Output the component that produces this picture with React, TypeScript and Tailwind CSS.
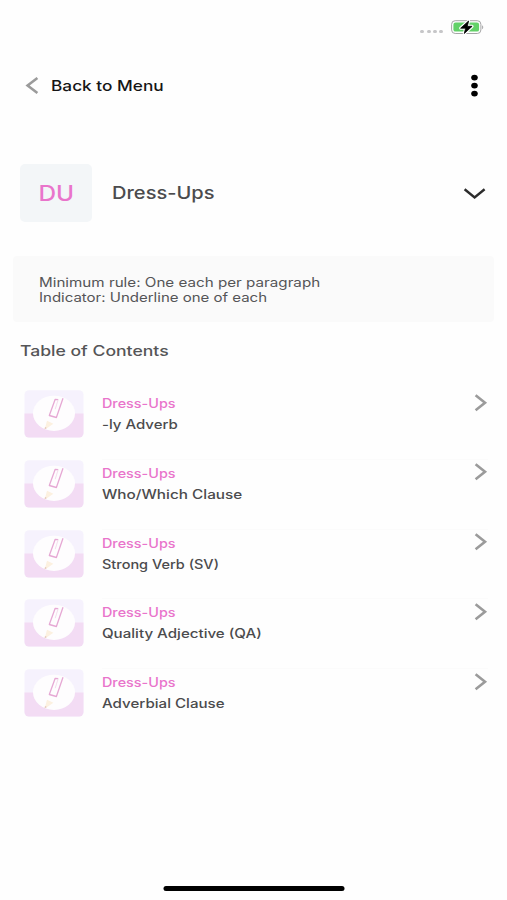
import React from 'react';

interface ContentItem {
    id: number;
    category: string;
    title: string;
    scale: string;
}

const items: ContentItem[] = [
    { id: 1, category: 'Dress-Ups', title: '-ly Adverb', scale: 'scale-x-[1.2]' },
    { id: 2, category: 'Dress-Ups', title: 'Who/Which Clause', scale: 'scale-x-[1.225]' },
    { id: 3, category: 'Dress-Ups', title: 'Strong Verb (SV)', scale: 'scale-x-[1.16]' },
    { id: 4, category: 'Dress-Ups', title: 'Quality Adjective (QA)', scale: 'scale-x-[1.21]' },
    { id: 5, category: 'Dress-Ups', title: 'Adverbial Clause', scale: 'scale-x-[1.21]' },
];

const StatusBar: React.FC = () => (
    <div className="flex h-[54px] items-start justify-end pt-[19px] pr-[23px]">
        <div className="mt-[11px] mr-[8px] flex gap-[2.2px]">
            {[0, 1, 2, 3].map(dot => (
                <span key={dot} className="h-[3.4px] w-[4px] rounded-full bg-[#c6c6c8]" />
            ))}
        </div>
        <svg className="h-[17px] w-[33px]" viewBox="0 0 33 17" fill="none">
            <rect x="0.6" y="1.7" width="29.3" height="12.8" rx="3.6" stroke="#a5a5a6" />
            <rect x="2.4" y="3.6" width="25.7" height="9" rx="2.2" fill="#62d168" />
            <path d="M31.3 6.3c1.2.6 1.2 3.4 0 4z" fill="#8d8d8f" />
            <path d="M17.6 2 9.6 9.2h5l-1.3 5.3 7.8-7.2h-4.8z" fill="#000" stroke="#fff" strokeWidth="3" strokeLinejoin="round" />
            <path d="M17.6 2 9.6 9.2h5l-1.3 5.3 7.8-7.2h-4.8z" fill="#000" stroke="#000" strokeWidth="0.8" strokeLinejoin="round" />
        </svg>
    </div>
);

const Thumbnail: React.FC = () => (
    <svg className="h-[48px] w-[60px] shrink-0" viewBox="0 0 60 48" fill="none">
        <rect x="0.5" y="0.3" width="59" height="47.2" rx="4.5" fill="#f6f2fd" />
        <path d="M.5 23.5h59V43a4.5 4.5 0 0 1-4.5 4.5H5A4.5 4.5 0 0 1 .5 43z" fill="#f3dcf4" />
        <ellipse cx="30" cy="23.3" rx="21" ry="17.6" fill="#fefdfe" />
        <path d="m23 30.8 6.4 3-6.9 4.6-1.7.5z" fill="#fcf1e0" />
        <path d="m20.6 39.3.4-2.2 1.9.9z" fill="#e3c5b8" />
        <path d="m34.2 9.6-3-.3-5.9 16.2 7.1 2 6.6-19.2" stroke="#e6a8d4" strokeWidth="1.3" strokeLinejoin="round" />
        <path d="m34.2 9.6-3 9.6" stroke="#f1d3e9" strokeWidth="0.8" />
    </svg>
);

const ContentRow: React.FC<{ item: ContentItem }> = ({ item }) => (
    <li className="group flex h-[69.75px]">
        <Thumbnail />
        <div className="ml-[18px] flex flex-1 border-b border-[#fbfbfb] group-last:border-transparent">
            <div className="flex flex-1 flex-col pt-[3px] text-[12.5px] leading-[21px] font-medium whitespace-nowrap">
                <span className="origin-left scale-x-[1.15] text-[#e974cb]">{item.category}</span>
                <span className={`origin-left text-[#4b4b4d] ${item.scale}`}>{item.title}</span>
            </div>
            <svg className="mt-[2.5px] h-[20px] w-[14px]" viewBox="0 0 14 20" fill="none">
                <path d="m1.6 2.2 9.4 7.5-9.4 7.5" stroke="#9b9b9b" strokeWidth="2.6" />
            </svg>
        </div>
    </li>
);

export default function App() {
    return (
        <div className="flex h-[900px] w-[507px] flex-col overflow-hidden bg-[#fefefe] font-['Inter',sans-serif]">
            <StatusBar />

            <header className="flex h-[64px] items-center pr-[27px] pl-[25px]">
                <svg className="h-[20px] w-[14px]" viewBox="0 0 14 20" fill="none">
                    <path d="M12.4 2 2.6 9.5l9.8 7.5" stroke="#9b9b9b" strokeWidth="2.6" />
                </svg>
                <span className="ml-[12px] origin-left scale-x-[1.19] text-[14.5px] font-medium text-[#151515]">Back to Menu</span>
                <svg className="ml-auto h-[24px] w-[10px]" viewBox="0 0 10 24" fill="#000">
                    <ellipse cx="4.5" cy="3.6" rx="3.3" ry="2.9" />
                    <ellipse cx="4.5" cy="11.6" rx="3.3" ry="2.9" />
                    <ellipse cx="4.5" cy="19.6" rx="3.3" ry="2.9" />
                </svg>
            </header>

            <section className="mt-[46px] flex h-[58px] items-center pr-[20px] pl-[20px]">
                <div className="flex h-[58px] w-[72px] items-center justify-center rounded-[5px] bg-[#f3f6f8]">
                    <span className="mt-[2px] scale-x-[1.16] text-[21px] font-medium text-[#e974cb]">DU</span>
                </div>
                <h1 className="ml-[20px] origin-left scale-x-[1.14] text-[17.6px] font-medium text-[#4b4b4d]">Dress-Ups</h1>
                <svg className="ml-auto h-[16px] w-[26px]" viewBox="0 0 26 16" fill="none">
                    <path d="m3.6 4.2 10 8.2 10-8.2" stroke="#2c2c2c" strokeWidth="2.4" />
                </svg>
            </section>

            <section className="mx-[13px] mt-[34px] h-[66px] rounded-[4px] bg-[#fafafa] pt-[19px] pl-[26px] text-[12.5px] leading-[15px] whitespace-nowrap text-[#555557]">
                <p className="origin-left scale-x-[1.215]">Minimum rule: One each per paragraph</p>
                <p className="origin-left scale-x-[1.2]">Indicator: Underline one of each</p>
            </section>

            <h2 className="mt-[19px] ml-[20px] origin-left scale-x-[1.23] text-[14.3px] leading-[20px] font-medium text-[#555557]">Table of Contents</h2>

            <ul className="mt-[29px] pr-[19px] pl-[24px]">
                {items.map(item => (
                    <ContentRow key={item.id} item={item} />
                ))}
            </ul>

            <div className="mx-auto mt-auto mb-[9px] h-[5px] w-[181px] translate-x-[0.5px] rounded-full bg-black" />
        </div>
    );
}
